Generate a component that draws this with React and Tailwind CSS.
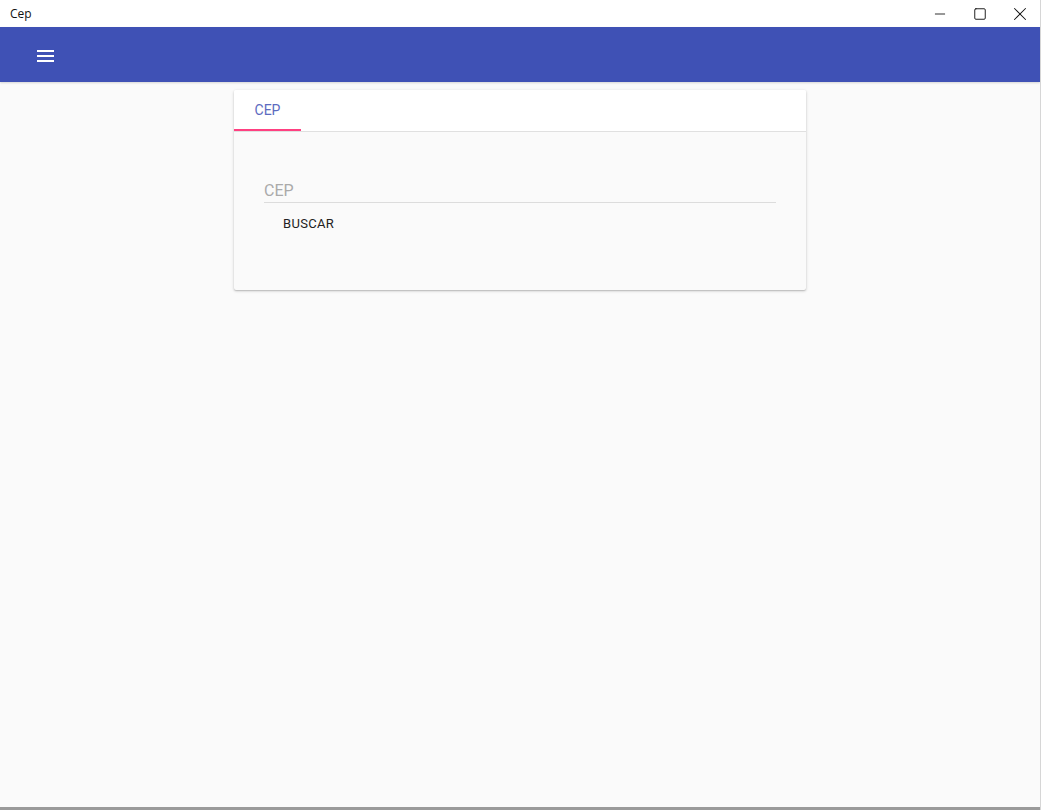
import { Minus, Square, X } from 'lucide-react'

const ui = { fontFamily: '"Open Sans", "Noto Sans", sans-serif' }
const roboto = { fontFamily: 'Roboto, "Noto Sans", sans-serif' }

function TitleBar() {
  return (
    <div className="h-[27px] bg-white flex items-center justify-between shrink-0" style={ui}>
      <span className="pl-[10px] text-[12px] text-[#111]">Cep</span>
      <div className="flex h-full">
        <button className="w-[40px] h-full flex items-center justify-center text-[#111]">
          <Minus size={16} strokeWidth={1.3} />
        </button>
        <button className="w-[40px] h-full flex items-center justify-center text-[#111]">
          <Square size={14} strokeWidth={1.6} />
        </button>
        <button className="w-[40px] h-full flex items-center justify-center text-[#111]">
          <X size={22} strokeWidth={1.1} />
        </button>
      </div>
    </div>
  )
}

function MenuIcon() {
  return (
    <svg width="17" height="12" viewBox="0 0 17 12" className="block">
      <rect x="0" y="0" width="17" height="2" fill="#fff" />
      <rect x="0" y="5" width="17" height="2" fill="#fff" />
      <rect x="0" y="10" width="17" height="2" fill="#fff" />
    </svg>
  )
}

export default function App() {
  return (
    <div className="w-[1041px] h-[810px] flex flex-col bg-[#fafafa] overflow-hidden border-r border-[#d6d6d6]">
      <TitleBar />

      {/* toolbar */}
      <header className="h-[55px] bg-[#3f51b5] flex items-center pl-[37px] pt-[3px] shrink-0 shadow-[0_1px_2px_rgba(0,0,0,0.15)]">
        <MenuIcon />
      </header>

      <main className="flex-1 flex justify-center pt-[8px]" style={roboto}>
        <section className="w-[572px] h-[200px] flex flex-col rounded-[2px] shadow-[0_1px_3px_rgba(0,0,0,0.22),0_1px_1px_rgba(0,0,0,0.1)] bg-[#fafafa] overflow-hidden">
          {/* tabs */}
          <div className="h-[42px] bg-white border-b border-[#e0e0e0] flex shrink-0">
            <div className="w-[67px] flex items-center justify-center pt-[2px] border-b-2 border-[#ff4081] text-[14px] text-[#5c6bc0]">
              CEP
            </div>
          </div>

          {/* form */}
          <div className="flex-1 px-[30px] pt-[48px]">
            <div className="h-[23px] border-b border-[#dcdcdc] text-[16px] leading-[22px] text-[#aaaaaa]">CEP</div>
            <button className="mt-[12px] pl-[19px] text-[13px] leading-[18px] tracking-[0.3px] text-[#222]">BUSCAR</button>
          </div>
        </section>
      </main>

      <div className="h-[3px] bg-[#9a9a9a] shrink-0" />
    </div>
  )
}
